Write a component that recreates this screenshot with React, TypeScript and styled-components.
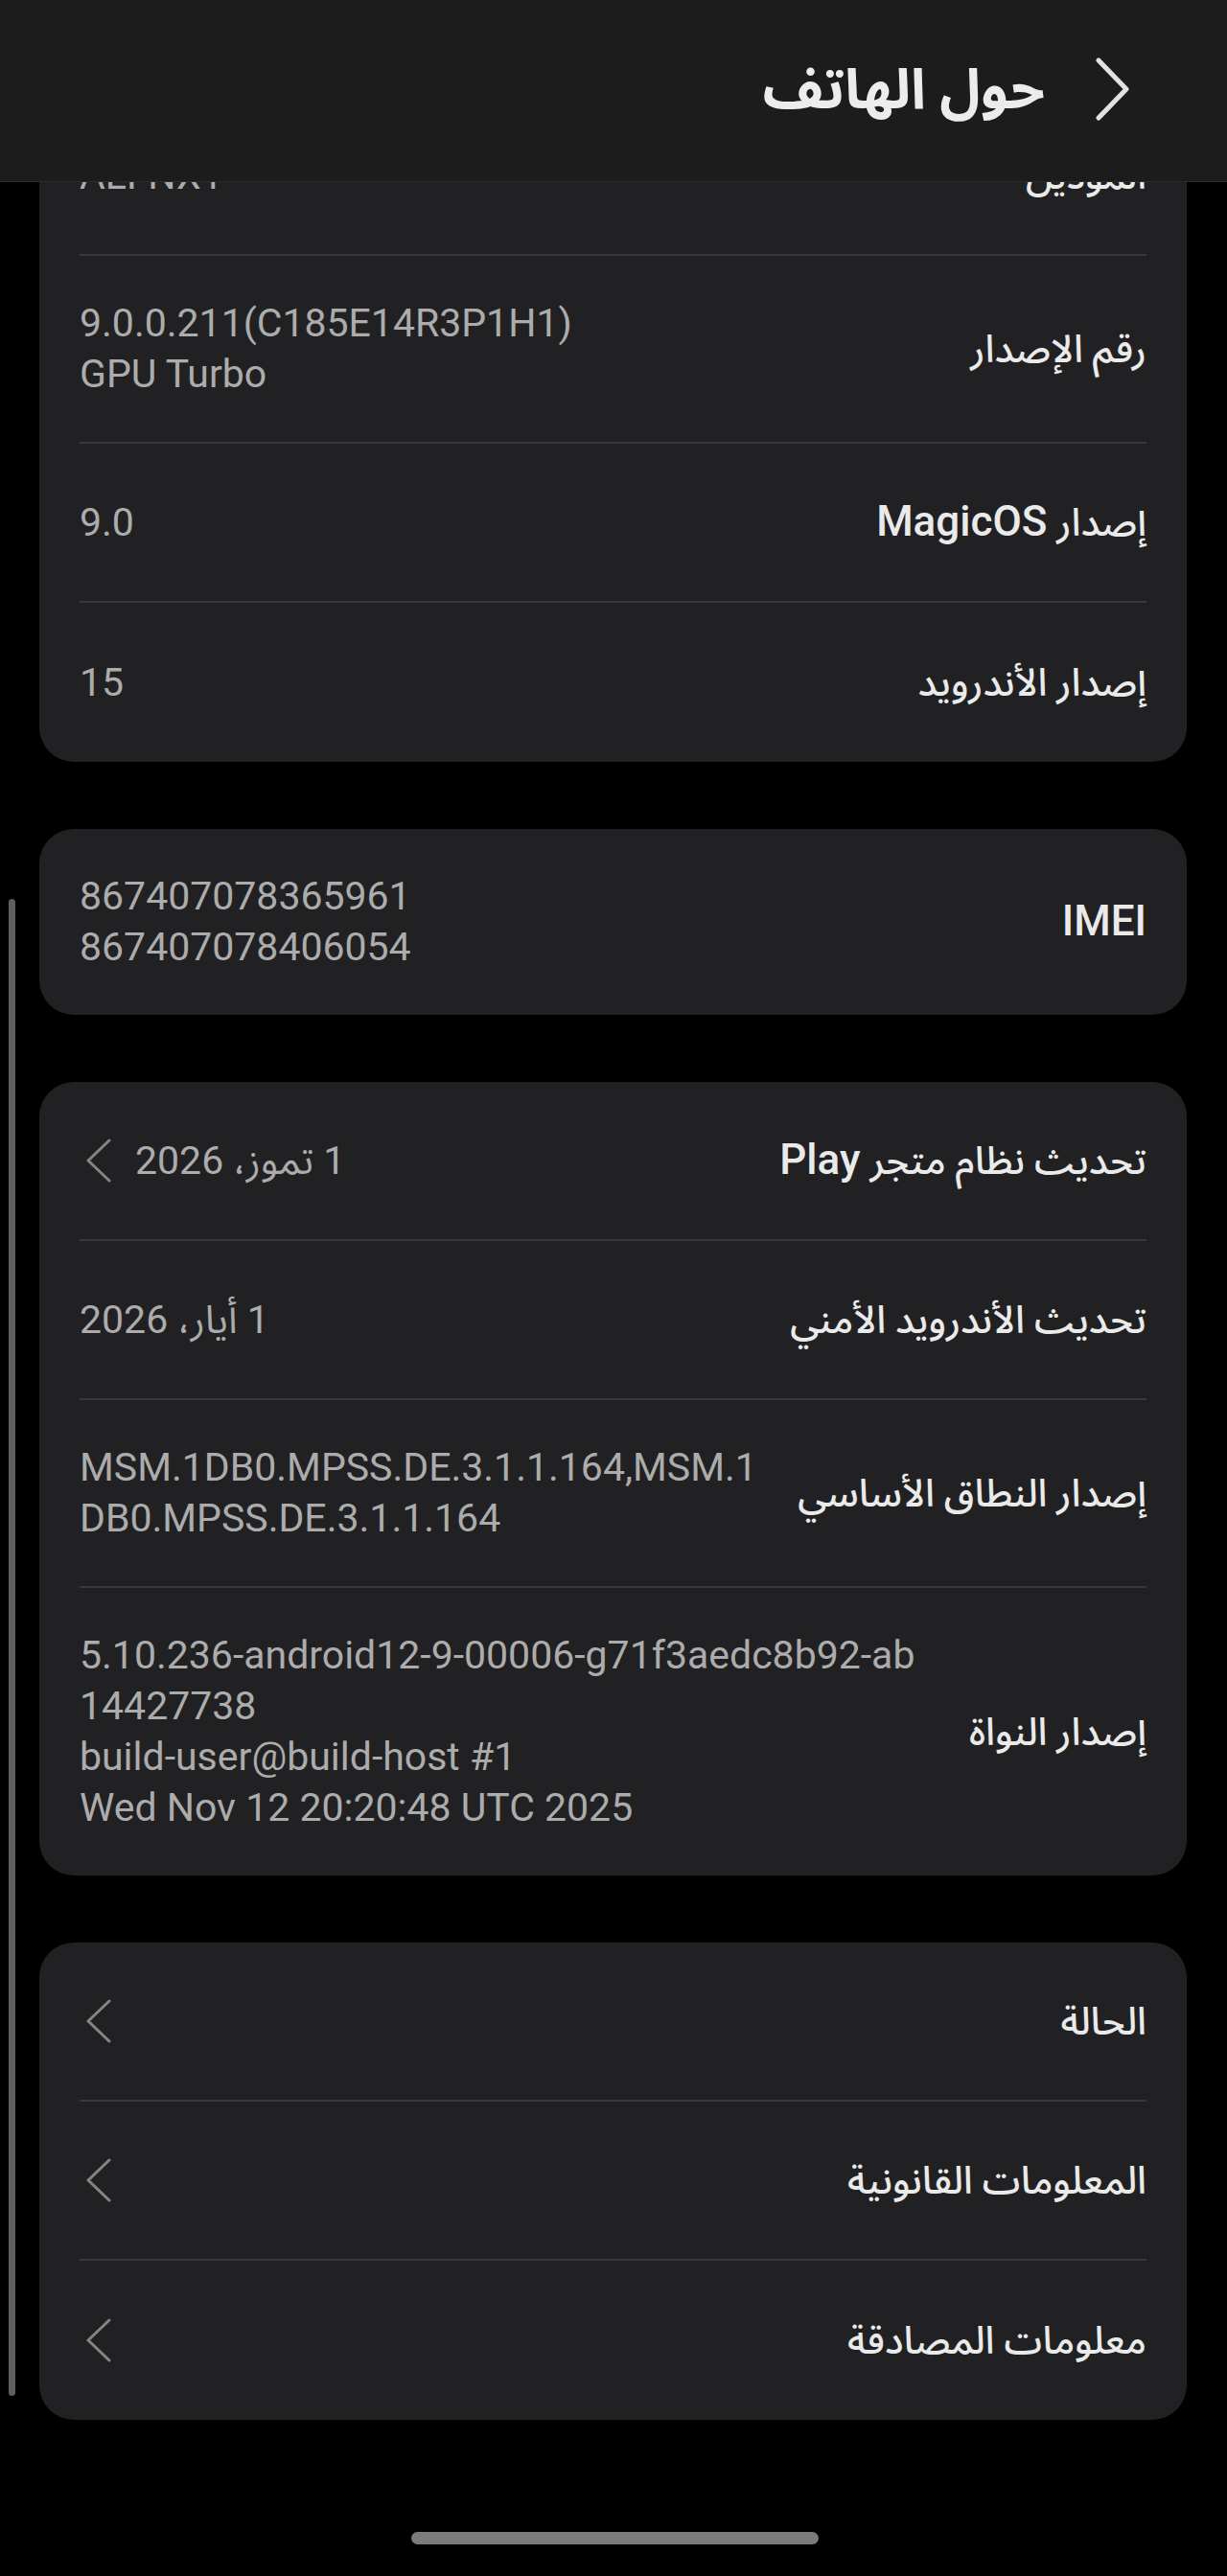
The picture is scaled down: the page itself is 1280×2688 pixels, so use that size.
import styled, { createGlobalStyle } from "styled-components";

const GlobalStyle = createGlobalStyle`
  html, body {
    margin: 0;
    padding: 0;
    background: #000;
  }
  body {
    font-family: Roboto, "Noto Sans Arabic", "DejaVu Sans", sans-serif;
    -webkit-font-smoothing: antialiased;
  }
`;

const Screen = styled.div`
  position: relative;
  width: 1280px;
  height: 2688px;
  overflow: hidden;
  background: #000;
`;

const Header = styled.header`
  position: absolute;
  top: 0;
  left: 0;
  right: 0;
  height: 190px;
  box-sizing: border-box;
  background: #1c1c1c;
  border-bottom: 1px solid #2c2c2c;
  display: flex;
  align-items: center;
  gap: 50px;
  padding: 0 100px 4px 0;
  z-index: 2;
`;

const Title = styled.h1`
  margin: 0;
  font-size: 58px;
  font-weight: 700;
  color: #ececec;
  line-height: 1;
`;

const Content = styled.main`
  display: flex;
  flex-direction: column;
  gap: 70px;
  padding: 101px 42px 0 41px;
`;

const Card = styled.section`
  background: #212123;
  border-radius: 36px;
  padding: 0 42px;
`;

const Row = styled.div`
  display: flex;
  align-items: center;
  gap: 24px;
  min-height: 166px;
  box-sizing: border-box;
  padding: 44px 0;
  border-bottom: 2px solid #39393b;

  &:last-child {
    border-bottom: none;
  }
`;

const Label = styled.div`
  flex-shrink: 0;
  font-size: 40px;
  font-weight: 500;
  color: #eaeaea;
  line-height: 53px;
  white-space: nowrap;
`;

// Latin words inside the labels (MagicOS, Play, IMEI) are set a little larger
const Brand = styled.span`
  font-size: 44px;
  font-weight: 500;
`;

const ValueWrap = styled.div`
  flex: 1;
  min-width: 0;
  display: flex;
  align-items: center;
  justify-content: flex-end;
  gap: 22px;
`;

const Value = styled.div`
  font-size: 41px;
  color: #acacac;
  line-height: 53px;
  text-align: left;
  unicode-bidi: plaintext;
`;

const Line = styled.div`
  unicode-bidi: plaintext;
  text-align: left;
  white-space: nowrap;
`;

const Scrollbar = styled.div`
  position: absolute;
  left: 9px;
  top: 938px;
  width: 7px;
  height: 1562px;
  border-radius: 4px;
  background: #5f5f5f;
`;

const HomeBar = styled.div`
  position: absolute;
  left: 429px;
  top: 2642px;
  width: 425px;
  height: 13px;
  border-radius: 7px;
  background: #7b7b7b;
`;

const BackIcon = () => (
  <svg width="40" height="66" viewBox="0 0 40 66" fill="none">
    <path
      d="M6 3 L35 33 L6 63"
      stroke="#e2e2e2"
      strokeWidth="5"
      strokeLinecap="round"
      strokeLinejoin="round"
    />
  </svg>
);

const Chevron = () => (
  <svg width="36" height="46" viewBox="0 0 36 46" fill="none">
    <path
      d="M31 2 L9 23 L31 44"
      stroke="#858585"
      strokeWidth="3"
      strokeLinecap="round"
      strokeLinejoin="round"
    />
  </svg>
);

type Item = { label: React.ReactNode; value?: string[]; arrow?: boolean };

const cards: Item[][] = [
  [
    { label: "الموديل", value: ["ALI-NX1"] },
    { label: "رقم الإصدار", value: ["9.0.0.211(C185E14R3P1H1)", "GPU Turbo"] },
    { label: <>إصدار <Brand>MagicOS</Brand></>, value: ["9.0"] },
    { label: "إصدار الأندرويد", value: ["15"] },
  ],
  [{ label: <Brand>IMEI</Brand>, value: ["867407078365961", "867407078406054"] }],
  [
    {
      label: <>تحديث نظام متجر <Brand>Play</Brand></>,
      value: ["1 تموز، 2026"],
      arrow: true,
    },
    { label: "تحديث الأندرويد الأمني", value: ["1 أيار، 2026"] },
    {
      label: "إصدار النطاق الأساسي",
      value: ["MSM.1DB0.MPSS.DE.3.1.1.164,MSM.1", "DB0.MPSS.DE.3.1.1.164"],
    },
    {
      label: "إصدار النواة",
      value: [
        "5.10.236-android12-9-00006-g71f3aedc8b92-ab",
        "14427738",
        "build-user@build-host #1",
        "Wed Nov 12 20:20:48 UTC 2025",
      ],
    },
  ],
  [
    { label: "الحالة", arrow: true },
    { label: "المعلومات القانونية", arrow: true },
    { label: "معلومات المصادقة", arrow: true },
  ],
];

export default function App() {
  return (
    <>
      <GlobalStyle />
      <Screen dir="rtl">
        <Header>
          <BackIcon />
          <Title>حول الهاتف</Title>
        </Header>
        <Content>
          {cards.map((items, i) => (
            <Card key={i}>
              {items.map((item, j) => (
                <Row key={j}>
                  <Label>{item.label}</Label>
                  <ValueWrap>
                    {item.value && (
                      <Value>
                        {item.value.map((l, k) => (
                          <Line key={k}>{l}</Line>
                        ))}
                      </Value>
                    )}
                    {item.arrow && <Chevron />}
                  </ValueWrap>
                </Row>
              ))}
            </Card>
          ))}
        </Content>
        <Scrollbar />
        <HomeBar />
      </Screen>
    </>
  );
}
